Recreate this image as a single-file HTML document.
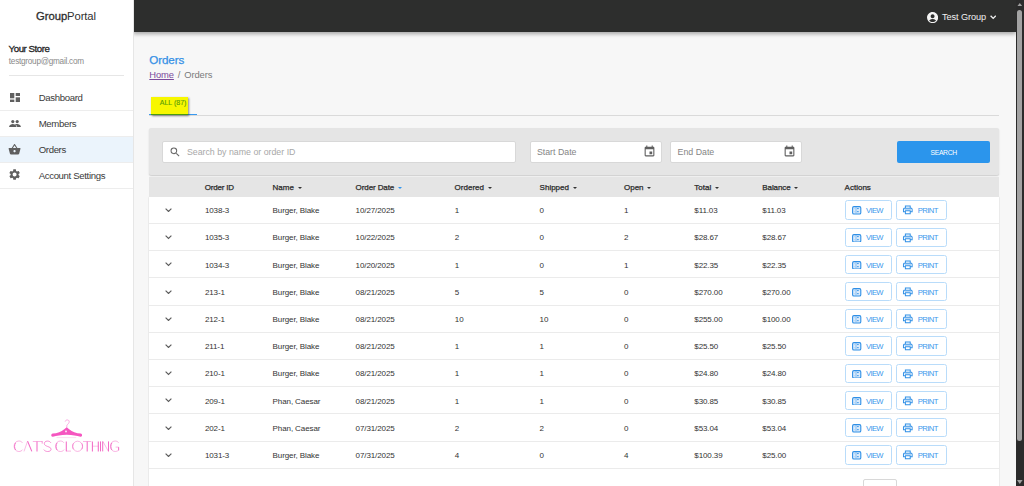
<!DOCTYPE html>
<html><head><meta charset="utf-8">
<style>
*{box-sizing:border-box;margin:0;padding:0}
html,body{width:1024px;height:486px;overflow:hidden;background:#f7f7f7;font-family:"Liberation Sans",sans-serif;color:#333}
#side{position:absolute;z-index:3;left:0;top:0;width:134px;height:486px;background:#fff;border-right:1px solid #e6e6e6}
#brand{position:absolute;left:-0.5px;width:133px;top:10.4px;text-align:center;font-size:11.25px;color:#2f2f2f;white-space:nowrap;letter-spacing:-0.1px}
#brand b{font-weight:normal;-webkit-text-stroke:0.32px #2f2f2f;letter-spacing:-0.05px}
#store{position:absolute;left:8.6px;top:42.9px;font-size:9.7px;font-weight:normal;color:#222;-webkit-text-stroke:0.28px #222;letter-spacing:-0.45px;white-space:nowrap}
#email{position:absolute;left:8.8px;top:56.5px;font-size:8.2px;color:#8a8a8a;letter-spacing:-0.25px;white-space:nowrap}
#div1{position:absolute;left:8.5px;top:75px;width:115.5px;height:1px;background:#e6e6e6}
.nav{position:absolute;left:0;width:133px;height:26.4px;border-bottom:1px solid #ededed}
.nav span{position:absolute;left:38.7px;top:7px;font-size:9.6px;color:#3a3a3a;letter-spacing:-0.35px;white-space:nowrap}
.nav svg{position:absolute}
.nav.active{background:#ebf4fc}
#hdr{position:absolute;left:133px;top:0;width:883px;height:32px;background:#2d2e2d;box-shadow:0 1.5px 4px rgba(0,0,0,.33)}
#user{position:absolute;left:942px;top:12.2px;font-size:9.2px;color:#f0f0f0;white-space:nowrap;letter-spacing:-0.1px}
#sb{position:absolute;left:1016px;top:0;width:8px;height:486px;background:#2b2b2b}
#thumb{position:absolute;left:1.4px;top:9.5px;width:5px;height:431.5px;border-radius:2.5px;background:#a3a3a3}
#title{position:absolute;left:149.3px;top:53.1px;font-size:11.6px;color:#3490e6;-webkit-text-stroke:0.25px #3490e6;letter-spacing:-0.1px}
#crumb{position:absolute;left:149.3px;top:69.2px;font-size:9.4px;color:#7a7a7a;white-space:nowrap;letter-spacing:-0.1px}
#crumb a{color:#7b4a9c;text-decoration:underline;text-decoration-thickness:0.8px;text-underline-offset:1px}
#crumb i{font-style:normal;margin:0 3.9px}
#tabline{position:absolute;left:149px;top:114.6px;width:850px;height:0.8px;background:#dadada}
#tabsel{position:absolute;left:149px;top:113.7px;width:48px;height:1.7px;background:#3a9af0}
#hl{position:absolute;left:151.2px;top:96.8px;width:37.3px;height:18.5px;background:#f7f700;box-shadow:1px 1px 2px rgba(0,0,0,.45);border-bottom:1.2px solid #4a9a10}
#alltxt{position:absolute;left:159.8px;top:99.3px;font-size:7px;color:#5a9e08;white-space:nowrap;-webkit-text-stroke:0.12px #5a9e08;letter-spacing:0px}
#filter{position:absolute;left:149px;top:128.2px;width:850px;height:46.8px;background:#e5e5e5;border-radius:2px;box-shadow:0 1px 1.5px rgba(0,0,0,.18)}
.inp{position:absolute;top:141.3px;height:21.5px;background:#fff;border:1px solid #d8d8d8;border-radius:2px}
.inp span{position:absolute;top:4.9px;font-size:8.8px;color:#858585;white-space:nowrap;letter-spacing:0px}
#searchbtn{position:absolute;left:897.2px;top:141.2px;width:93px;height:21.4px;background:#2b95ec;border-radius:2px;color:#fff;font-size:6.8px;text-align:center;line-height:23.2px;letter-spacing:-0.3px}
#thead{position:absolute;left:149px;top:177px;width:850px;height:19.8px;background:#e5e5e5}
#thead span{position:absolute;top:5.9px;font-size:8px;font-weight:normal;color:#2a2a2a;-webkit-text-stroke:0.25px #2a2a2a;white-space:nowrap;letter-spacing:0px}
.tri{display:inline-block;width:0;height:0;border-left:2.6px solid transparent;border-right:2.6px solid transparent;border-top:2.9px solid #333;margin-left:3.9px;vertical-align:1.4px}
#tbody{position:absolute;left:149px;top:196.8px;width:850px;height:290px;background:#fff;box-shadow:0 0 1.2px rgba(0,0,0,.22)}
.row{position:absolute;left:0;width:850px;height:27.2px;border-bottom:1px solid #ebebeb}
.row .chev{position:absolute;left:16px;top:11.2px}
.row .c{position:absolute;top:9.4px;font-size:8px;color:#333;white-space:nowrap;letter-spacing:-0.1px}
.btn{position:absolute;top:3.6px;height:19.5px;border:1px solid #b9dcfa;border-radius:2.5px}
.btn.view{width:47.4px}
.btn.print{width:50.6px}
.btn .bi{position:absolute;left:6.6px;top:5.1px}
.btn.print .bi{left:4.7px;top:2.95px}
.btn b{position:absolute;top:4.8px;font-weight:normal;font-size:7.6px;color:#3a97ec;white-space:nowrap;letter-spacing:-0.62px}
.btn.view b{left:20.3px}
.btn.print b{left:20.6px;letter-spacing:-0.5px}
#pag{position:absolute;left:862.7px;top:479.1px;width:34px;height:20px;border:1px solid #d8d8d8;border-radius:2px;background:#fff}
</style></head><body>
<div id="side">
  <div id="brand"><b>Group</b>Portal</div>
  <div id="store">Your Store</div>
  <div id="email">testgroup@gmail.com</div>
  <div id="div1"></div>
  <div class="nav" style="top:84.5px"><svg style="left:10px;top:8.3px" width="10" height="9.6" viewBox="0 0 10 9.6"><rect x="0" y="0" width="4.3" height="5.3" fill="#5f5f5f"/><rect x="5.7" y="0" width="4.3" height="3" fill="#5f5f5f"/><rect x="0" y="6.6" width="4.3" height="3" fill="#5f5f5f"/><rect x="5.7" y="4.3" width="4.3" height="5.3" fill="#5f5f5f"/></svg><span>Dashboard</span></div>
  <div class="nav" style="top:110.5px"><svg style="left:9.1px;top:9.2px" width="12" height="7.6" viewBox="0 0 12 7.6"><circle cx="3.8" cy="1.6" r="1.6" fill="#5f5f5f"/><circle cx="8.2" cy="1.6" r="1.6" fill="#5f5f5f"/><path d="M0 7.6 C0 4.8 2.2 4 3.8 4 C5.4 4 7.6 4.8 7.6 7.6Z" fill="#5f5f5f"/><path d="M5.6 4.3 C6.6 4 7.4 4 8.2 4 C9.8 4 12 4.8 12 7.6 H8.3 C8.3 6 7.2 4.9 5.6 4.3Z" fill="#5f5f5f"/></svg><span>Members</span></div>
  <div class="nav active" style="top:136.5px"><svg style="left:8.25px;top:6.4px" width="13.1" height="13.1" viewBox="0 0 24 24"><path fill="#5f5f5f" d="M17.21 9l-4.38-6.56c-.19-.28-.51-.42-.83-.42-.32 0-.64.14-.83.43L6.79 9H2c-.55 0-1 .45-1 1 0 .09.01.18.04.27l2.54 9.27c.23.84 1 1.460 1.92 1.46h13c.92 0 1.69-.62 1.93-1.46l2.54-9.27L23 10c0-.55-.45-1-1-1h-4.79zM9 9l3-4.4L15 9H9zm3 8c-1.1 0-2-.9-2-2s.9-2 2-2 2 .9 2 2-.9 2-2 2z"/></svg><span>Orders</span></div>
  <div class="nav" style="top:162.7px"><svg style="left:8.3px;top:5.8px" width="13.2" height="13.2" viewBox="0 0 24 24"><path fill="#5f5f5f" d="M19.14 12.94c.04-.3.06-.61.06-.94 0-.32-.02-.64-.07-.94l2.030-1.58a.49.49 0 0 0 .12-.61l-1.92-3.32a.488.488 0 0 0-.59-.22l-2.39.96c-.5-.38-1.03-.7-1.62-.94l-.36-2.54a.484.484 0 0 0-.48-.41h-3.84c-.24 0-.43.17-.47.41l-.36 2.54c-.59.24-1.13.57-1.62.94l-2.39-.96c-.22-.08-.47 0-.59.22L2.74 8.870c-.12.21-.08.47.12.61l2.03 1.58c-.05.3-.09.63-.09.94s.02.64.07.94l-2.03 1.58a.49.49 0 0 0-.12.61l1.92 3.32c.12.22.37.29.59.22l2.39-.96c.5.38 1.03.7 1.62.94l.36 2.54c.05.24.24.41.48.41h3.84c.24 0 .44-.17.47-.41l.36-2.54c.59-.24 1.13-.56 1.62-.94l2.39.96c.22.08.47 0 .59-.22l1.92-3.32c.12-.22.07-.47-.12-.61l-2.01-1.58zM12 15.6c-1.98 0-3.6-1.62-3.6-3.6s1.62-3.6 3.6-3.6 3.6 1.62 3.6 3.6-1.620 3.6-3.6 3.6z"/></svg><span>Account Settings</span></div>
  <svg style="position:absolute;left:0;top:410px" width="133" height="50" viewBox="0 410 133 50">
    <path d="M66.8 427.6 L66.9 425.2 C67.5 424.2 69.4 423.2 69.2 421.4 C69 419.6 65.6 419.2 65.2 421.6" fill="none" stroke="#f78ad6" stroke-width="0.7"/>
    <path transform="translate(66.7 0) scale(0.92 1) translate(-66.7 0)" d="M66.7 427.3 C63 430 60 432.4 55 433.2 L51.5 433.5 C49.4 433.8 49.4 437 51.7 436.7 C56 436 60 434.8 66.7 434.8 C73.4 434.8 77.4 436 81.7 436.7 C84 437 84 433.8 81.9 433.5 L78.4 433.2 C73.4 432.4 70.4 430 66.7 427.3Z" fill="#f556c0"/>
    <path d="M65 431.2 C65 430.4 65.9 430.4 66 431 C66.1 430.4 67 430.4 67 431.2 C67 431.9 66 432.6 66 432.6 C66 432.6 65 431.9 65 431.2Z" fill="#fde6f4"/>
    <path d="M56.6 437.6 H76.2" stroke="#f9c4e6" stroke-width="0.55"/>
    <g fill="none" stroke="#f26cc6">
      <path d="M22.4 442.8 C21.6 441.4 20.2 441 18.8 441 C15.8 441 14.1 443.6 14.1 446.3 C14.1 449.1 15.9 451.5 18.9 451.5 C20.4 451.5 21.8 450.9 22.6 449.6" stroke-width="0.5"/>
      <path d="M15.6 442.8 C14.2 445 14.2 447.8 15.6 450" stroke-width="0.9"/>
      <path d="M24 451.4 L27.6 441.1" stroke-width="0.45"/>
      <path d="M27.6 441.1 L31.8 451.4" stroke-width="1.1"/>
      <path d="M32.8 441.5 H42" stroke-width="0.5"/>
      <path d="M37 441.4 V451.4" stroke-width="1.05"/>
      <path d="M42.2 441 V443.6" stroke-width="0.7"/>
      <path d="M50.9 442.8 C50 441.4 48.6 441.1 47.4 441.1 C45.4 441.1 44.3 442.2 44.3 443.7 C44.3 446.6 51.1 446.4 51.1 449.2 C51.1 450.8 49.6 451.5 47.6 451.5 C46 451.5 44.6 450.8 43.8 449.6" stroke-width="0.75"/>
      <path d="M63.9 442.8 C63.1 441.4 61.7 441 60.3 441 C57.3 441 55.6 443.6 55.6 446.3 C55.6 449.1 57.4 451.5 60.4 451.5 C61.9 451.5 63.3 450.9 64.1 449.6" stroke-width="0.5"/>
      <path d="M57.1 442.8 C55.7 445 55.7 447.8 57.1 450" stroke-width="0.9"/>
      <path d="M66.3 441.4 V451.3" stroke-width="1.05"/>
      <path d="M66 451.1 H71" stroke-width="0.5"/>
      <ellipse cx="77.6" cy="446.3" rx="4.9" ry="5.1" stroke-width="0.5"/>
      <path d="M73.4 443.3 C72.4 445.2 72.4 447.4 73.4 449.3 M81.8 443.3 C82.8 445.2 82.8 447.4 81.8 449.3" stroke-width="0.7"/>
      <path d="M83 441.5 H91.3" stroke-width="0.5"/>
      <path d="M87.2 441.4 V451.4" stroke-width="1.05"/>
      <path d="M92.4 441.4 V451.4 M98.3 441.4 V451.4" stroke-width="1.05"/>
      <path d="M92.4 446.2 H98.3" stroke-width="0.4"/>
      <path d="M100.5 441.4 V451.4" stroke-width="1.05"/>
      <path d="M102.7 441.4 V451.4" stroke-width="1.0"/>
      <path d="M102.9 441.4 L108.4 451.4" stroke-width="0.45"/>
      <path d="M108.5 441.4 V451.4" stroke-width="1.0"/>
      <path d="M118.6 442.8 C117.8 441.4 116.4 441 115 441 C112 441 110.4 443.6 110.4 446.3 C110.4 449.1 112.2 451.5 115.2 451.5 C116.6 451.5 117.8 451 118.6 450.2 V447.1 H115.6" stroke-width="0.5"/>
      <path d="M111.9 442.8 C110.5 445 110.5 447.8 111.9 450 M118.6 447.2 V450.4" stroke-width="0.9"/>
    </g>
  </svg>
</div>
<div id="hdr"></div>
<svg style="position:absolute;left:927px;top:11.6px" width="11.2" height="11.2" viewBox="2 2 20 20"><path fill="#f4f4f4" d="M12 2C6.48 2 2 6.48 2 12s4.48 10 10 10 10-4.48 10-10S17.52 2 12 2zm0 4c1.93 0 3.5 1.57 3.5 3.5S13.93 13 12 13s-3.5-1.570-3.5-3.5S10.07 6 12 6zm0 14c-2.03 0-4.43-.82-6.14-2.88a9.947 9.947 0 0 1 12.28 0C16.43 19.18 14.03 20 12 20z"/></svg>
<div id="user">Test Group</div>
<svg style="position:absolute;left:989.6px;top:15.2px" width="6.4" height="4.4" viewBox="0 0 6.4 4.4"><path d="M0.6 0.7 L3.2 3.4 L5.8 0.7" fill="none" stroke="#f2f2f2" stroke-width="1.3"/></svg>
<div id="sb"><div id="thumb"></div>
<svg style="position:absolute;left:1.2px;top:2.6px" width="5.6" height="3.6" viewBox="0 0 5.6 3.6"><path d="M2.8 0 L5.6 3.6 H0Z" fill="#a0a0a0"/></svg>
<svg style="position:absolute;left:1.2px;top:479.6px" width="5.6" height="4" viewBox="0 0 5.6 4"><path d="M0 0 H5.6 L2.8 4Z" fill="#a0a0a0"/></svg>
</div>
<div id="title">Orders</div>
<div id="crumb"><a>Home</a><i>/</i>Orders</div>
<div id="tabline"></div>
<div id="tabsel"></div>
<div id="hl"></div>
<div id="alltxt">ALL (87)</div>
<div id="filter"></div>
<div class="inp" style="left:162.4px;width:354px"><svg style="position:absolute;left:6.1px;top:3.7px" width="12.3" height="12.3" viewBox="0 0 24 24"><path fill="#666" d="M15.5 14h-.79l-.28-.27A6.471 6.471 0 0 0 16 9.5 6.5 6.5 0 1 0 9.5 16c1.61 0 3.09-.59 4.23-1.57l.27.28v.79l5 4.99L20.49 19l-4.99-5zm-6 0C7.01 14 5 11.99 5 9.5S7.01 5 9.5 5 14 7.01 14 9.5 11.99 14 9.5 14z"/></svg><span style="left:23.5px;color:#a8a8a8">Search by name or order ID</span></div>
<div class="inp" style="left:529.5px;width:132.4px"><span style="left:6.4px">Start Date</span><svg style="position:absolute;left:112.8px;top:3px" width="13" height="13" viewBox="0 0 24 24"><path fill="#5f5f5f" d="M17 12h-5v5h5v-5zM16 1v2H8V1H6v2H5c-1.11 0-1.99.9-1.99 2L3 19a2 2 0 0 0 2 2h14c1.1 0 2-.9 2-2V5c0-1.1-.9-2-2-2h-1V1h-2zm3 18H5V8h14v11z"/></svg></div>
<div class="inp" style="left:670.2px;width:131.8px"><span style="left:6.4px">End Date</span><svg style="position:absolute;left:112.2px;top:3px" width="13" height="13" viewBox="0 0 24 24"><path fill="#5f5f5f" d="M17 12h-5v5h5v-5zM16 1v2H8V1H6v2H5c-1.11 0-1.99.9-1.99 2L3 19a2 2 0 0 0 2 2h14c1.1 0 2-.9 2-2V5c0-1.1-.9-2-2-2h-1V1h-2zm3 18H5V8h14v11z"/></svg></div>
<div id="searchbtn">SEARCH</div>
<div id="tbody">
<div class="row" style="top:0.0px"><svg class="chev" width="7" height="4.4" viewBox="0 0 7 4.4"><path d="M0.6 0.6 L3.5 3.5 L6.4 0.6" fill="none" stroke="#5c5c5c" stroke-width="1.15"/></svg><span class="c" style="left:55.9px">1038-3</span><span class="c" style="left:123.6px">Burger, Blake</span><span class="c" style="left:206.6px">10/27/2025</span><span class="c" style="left:305.8px">1</span><span class="c" style="left:390.6px">0</span><span class="c" style="left:475.0px">1</span><span class="c" style="left:545.3px">$11.03</span><span class="c" style="left:613.3px">$11.03</span><span class="btn view" style="left:695.7px"><svg class="bi" width="9.4" height="8.6" viewBox="0 0 9.4 8.6"><rect x="0.6" y="0.6" width="8.2" height="7.4" rx="1.3" fill="#dcecfc" stroke="#2f8fe6" stroke-width="1.1"/><path d="M4 1 V7.6" stroke="#6fb0ee" stroke-width="0.8"/><path d="M5 2.6 H6.8 M5 5.7 H6.8" stroke="#2f8fe6" stroke-width="0.9"/><path d="M1.8 2.6 H3 M1.8 5.7 H3" stroke="#a8d0f6" stroke-width="0.8"/></svg><b>VIEW</b></span><span class="btn print" style="left:747.1px"><svg class="bi" width="11.6" height="11.6" viewBox="0 0 24 24"><path fill="#2f8fe6" d="M19 8h-1V3H6v5H5c-1.66 0-3 1.34-3 3v6h4v4h12v-4h4v-6c0-1.66-1.34-3-3-3zM8 5h8v3H8V5zm8 12v2H8v-4h8v2zm2-2v-2H6v2H4v-4c0-.55.45-1 1-1h14c.55 0 1 .45 1 1v4h-2z"/><path d="M5 10.2h14v2H5z" fill="#a9d1f7"/></svg><b>PRINT</b></span></div>
<div class="row" style="top:27.2px"><svg class="chev" width="7" height="4.4" viewBox="0 0 7 4.4"><path d="M0.6 0.6 L3.5 3.5 L6.4 0.6" fill="none" stroke="#5c5c5c" stroke-width="1.15"/></svg><span class="c" style="left:55.9px">1035-3</span><span class="c" style="left:123.6px">Burger, Blake</span><span class="c" style="left:206.6px">10/22/2025</span><span class="c" style="left:305.8px">2</span><span class="c" style="left:390.6px">0</span><span class="c" style="left:475.0px">2</span><span class="c" style="left:545.3px">$28.67</span><span class="c" style="left:613.3px">$28.67</span><span class="btn view" style="left:695.7px"><svg class="bi" width="9.4" height="8.6" viewBox="0 0 9.4 8.6"><rect x="0.6" y="0.6" width="8.2" height="7.4" rx="1.3" fill="#dcecfc" stroke="#2f8fe6" stroke-width="1.1"/><path d="M4 1 V7.6" stroke="#6fb0ee" stroke-width="0.8"/><path d="M5 2.6 H6.8 M5 5.7 H6.8" stroke="#2f8fe6" stroke-width="0.9"/><path d="M1.8 2.6 H3 M1.8 5.7 H3" stroke="#a8d0f6" stroke-width="0.8"/></svg><b>VIEW</b></span><span class="btn print" style="left:747.1px"><svg class="bi" width="11.6" height="11.6" viewBox="0 0 24 24"><path fill="#2f8fe6" d="M19 8h-1V3H6v5H5c-1.66 0-3 1.34-3 3v6h4v4h12v-4h4v-6c0-1.66-1.34-3-3-3zM8 5h8v3H8V5zm8 12v2H8v-4h8v2zm2-2v-2H6v2H4v-4c0-.55.45-1 1-1h14c.55 0 1 .45 1 1v4h-2z"/><path d="M5 10.2h14v2H5z" fill="#a9d1f7"/></svg><b>PRINT</b></span></div>
<div class="row" style="top:54.4px"><svg class="chev" width="7" height="4.4" viewBox="0 0 7 4.4"><path d="M0.6 0.6 L3.5 3.5 L6.4 0.6" fill="none" stroke="#5c5c5c" stroke-width="1.15"/></svg><span class="c" style="left:55.9px">1034-3</span><span class="c" style="left:123.6px">Burger, Blake</span><span class="c" style="left:206.6px">10/20/2025</span><span class="c" style="left:305.8px">1</span><span class="c" style="left:390.6px">0</span><span class="c" style="left:475.0px">1</span><span class="c" style="left:545.3px">$22.35</span><span class="c" style="left:613.3px">$22.35</span><span class="btn view" style="left:695.7px"><svg class="bi" width="9.4" height="8.6" viewBox="0 0 9.4 8.6"><rect x="0.6" y="0.6" width="8.2" height="7.4" rx="1.3" fill="#dcecfc" stroke="#2f8fe6" stroke-width="1.1"/><path d="M4 1 V7.6" stroke="#6fb0ee" stroke-width="0.8"/><path d="M5 2.6 H6.8 M5 5.7 H6.8" stroke="#2f8fe6" stroke-width="0.9"/><path d="M1.8 2.6 H3 M1.8 5.7 H3" stroke="#a8d0f6" stroke-width="0.8"/></svg><b>VIEW</b></span><span class="btn print" style="left:747.1px"><svg class="bi" width="11.6" height="11.6" viewBox="0 0 24 24"><path fill="#2f8fe6" d="M19 8h-1V3H6v5H5c-1.66 0-3 1.34-3 3v6h4v4h12v-4h4v-6c0-1.66-1.34-3-3-3zM8 5h8v3H8V5zm8 12v2H8v-4h8v2zm2-2v-2H6v2H4v-4c0-.55.45-1 1-1h14c.55 0 1 .45 1 1v4h-2z"/><path d="M5 10.2h14v2H5z" fill="#a9d1f7"/></svg><b>PRINT</b></span></div>
<div class="row" style="top:81.6px"><svg class="chev" width="7" height="4.4" viewBox="0 0 7 4.4"><path d="M0.6 0.6 L3.5 3.5 L6.4 0.6" fill="none" stroke="#5c5c5c" stroke-width="1.15"/></svg><span class="c" style="left:55.9px">213-1</span><span class="c" style="left:123.6px">Burger, Blake</span><span class="c" style="left:206.6px">08/21/2025</span><span class="c" style="left:305.8px">5</span><span class="c" style="left:390.6px">5</span><span class="c" style="left:475.0px">0</span><span class="c" style="left:545.3px">$270.00</span><span class="c" style="left:613.3px">$270.00</span><span class="btn view" style="left:695.7px"><svg class="bi" width="9.4" height="8.6" viewBox="0 0 9.4 8.6"><rect x="0.6" y="0.6" width="8.2" height="7.4" rx="1.3" fill="#dcecfc" stroke="#2f8fe6" stroke-width="1.1"/><path d="M4 1 V7.6" stroke="#6fb0ee" stroke-width="0.8"/><path d="M5 2.6 H6.8 M5 5.7 H6.8" stroke="#2f8fe6" stroke-width="0.9"/><path d="M1.8 2.6 H3 M1.8 5.7 H3" stroke="#a8d0f6" stroke-width="0.8"/></svg><b>VIEW</b></span><span class="btn print" style="left:747.1px"><svg class="bi" width="11.6" height="11.6" viewBox="0 0 24 24"><path fill="#2f8fe6" d="M19 8h-1V3H6v5H5c-1.66 0-3 1.34-3 3v6h4v4h12v-4h4v-6c0-1.66-1.34-3-3-3zM8 5h8v3H8V5zm8 12v2H8v-4h8v2zm2-2v-2H6v2H4v-4c0-.55.45-1 1-1h14c.55 0 1 .45 1 1v4h-2z"/><path d="M5 10.2h14v2H5z" fill="#a9d1f7"/></svg><b>PRINT</b></span></div>
<div class="row" style="top:108.8px"><svg class="chev" width="7" height="4.4" viewBox="0 0 7 4.4"><path d="M0.6 0.6 L3.5 3.5 L6.4 0.6" fill="none" stroke="#5c5c5c" stroke-width="1.15"/></svg><span class="c" style="left:55.9px">212-1</span><span class="c" style="left:123.6px">Burger, Blake</span><span class="c" style="left:206.6px">08/21/2025</span><span class="c" style="left:305.8px">10</span><span class="c" style="left:390.6px">10</span><span class="c" style="left:475.0px">0</span><span class="c" style="left:545.3px">$255.00</span><span class="c" style="left:613.3px">$100.00</span><span class="btn view" style="left:695.7px"><svg class="bi" width="9.4" height="8.6" viewBox="0 0 9.4 8.6"><rect x="0.6" y="0.6" width="8.2" height="7.4" rx="1.3" fill="#dcecfc" stroke="#2f8fe6" stroke-width="1.1"/><path d="M4 1 V7.6" stroke="#6fb0ee" stroke-width="0.8"/><path d="M5 2.6 H6.8 M5 5.7 H6.8" stroke="#2f8fe6" stroke-width="0.9"/><path d="M1.8 2.6 H3 M1.8 5.7 H3" stroke="#a8d0f6" stroke-width="0.8"/></svg><b>VIEW</b></span><span class="btn print" style="left:747.1px"><svg class="bi" width="11.6" height="11.6" viewBox="0 0 24 24"><path fill="#2f8fe6" d="M19 8h-1V3H6v5H5c-1.66 0-3 1.34-3 3v6h4v4h12v-4h4v-6c0-1.66-1.34-3-3-3zM8 5h8v3H8V5zm8 12v2H8v-4h8v2zm2-2v-2H6v2H4v-4c0-.55.45-1 1-1h14c.55 0 1 .45 1 1v4h-2z"/><path d="M5 10.2h14v2H5z" fill="#a9d1f7"/></svg><b>PRINT</b></span></div>
<div class="row" style="top:136.0px"><svg class="chev" width="7" height="4.4" viewBox="0 0 7 4.4"><path d="M0.6 0.6 L3.5 3.5 L6.4 0.6" fill="none" stroke="#5c5c5c" stroke-width="1.15"/></svg><span class="c" style="left:55.9px">211-1</span><span class="c" style="left:123.6px">Burger, Blake</span><span class="c" style="left:206.6px">08/21/2025</span><span class="c" style="left:305.8px">1</span><span class="c" style="left:390.6px">1</span><span class="c" style="left:475.0px">0</span><span class="c" style="left:545.3px">$25.50</span><span class="c" style="left:613.3px">$25.50</span><span class="btn view" style="left:695.7px"><svg class="bi" width="9.4" height="8.6" viewBox="0 0 9.4 8.6"><rect x="0.6" y="0.6" width="8.2" height="7.4" rx="1.3" fill="#dcecfc" stroke="#2f8fe6" stroke-width="1.1"/><path d="M4 1 V7.6" stroke="#6fb0ee" stroke-width="0.8"/><path d="M5 2.6 H6.8 M5 5.7 H6.8" stroke="#2f8fe6" stroke-width="0.9"/><path d="M1.8 2.6 H3 M1.8 5.7 H3" stroke="#a8d0f6" stroke-width="0.8"/></svg><b>VIEW</b></span><span class="btn print" style="left:747.1px"><svg class="bi" width="11.6" height="11.6" viewBox="0 0 24 24"><path fill="#2f8fe6" d="M19 8h-1V3H6v5H5c-1.66 0-3 1.34-3 3v6h4v4h12v-4h4v-6c0-1.66-1.34-3-3-3zM8 5h8v3H8V5zm8 12v2H8v-4h8v2zm2-2v-2H6v2H4v-4c0-.55.45-1 1-1h14c.55 0 1 .45 1 1v4h-2z"/><path d="M5 10.2h14v2H5z" fill="#a9d1f7"/></svg><b>PRINT</b></span></div>
<div class="row" style="top:163.2px"><svg class="chev" width="7" height="4.4" viewBox="0 0 7 4.4"><path d="M0.6 0.6 L3.5 3.5 L6.4 0.6" fill="none" stroke="#5c5c5c" stroke-width="1.15"/></svg><span class="c" style="left:55.9px">210-1</span><span class="c" style="left:123.6px">Burger, Blake</span><span class="c" style="left:206.6px">08/21/2025</span><span class="c" style="left:305.8px">1</span><span class="c" style="left:390.6px">1</span><span class="c" style="left:475.0px">0</span><span class="c" style="left:545.3px">$24.80</span><span class="c" style="left:613.3px">$24.80</span><span class="btn view" style="left:695.7px"><svg class="bi" width="9.4" height="8.6" viewBox="0 0 9.4 8.6"><rect x="0.6" y="0.6" width="8.2" height="7.4" rx="1.3" fill="#dcecfc" stroke="#2f8fe6" stroke-width="1.1"/><path d="M4 1 V7.6" stroke="#6fb0ee" stroke-width="0.8"/><path d="M5 2.6 H6.8 M5 5.7 H6.8" stroke="#2f8fe6" stroke-width="0.9"/><path d="M1.8 2.6 H3 M1.8 5.7 H3" stroke="#a8d0f6" stroke-width="0.8"/></svg><b>VIEW</b></span><span class="btn print" style="left:747.1px"><svg class="bi" width="11.6" height="11.6" viewBox="0 0 24 24"><path fill="#2f8fe6" d="M19 8h-1V3H6v5H5c-1.66 0-3 1.34-3 3v6h4v4h12v-4h4v-6c0-1.66-1.34-3-3-3zM8 5h8v3H8V5zm8 12v2H8v-4h8v2zm2-2v-2H6v2H4v-4c0-.55.45-1 1-1h14c.55 0 1 .45 1 1v4h-2z"/><path d="M5 10.2h14v2H5z" fill="#a9d1f7"/></svg><b>PRINT</b></span></div>
<div class="row" style="top:190.4px"><svg class="chev" width="7" height="4.4" viewBox="0 0 7 4.4"><path d="M0.6 0.6 L3.5 3.5 L6.4 0.6" fill="none" stroke="#5c5c5c" stroke-width="1.15"/></svg><span class="c" style="left:55.9px">209-1</span><span class="c" style="left:123.6px">Phan, Caesar</span><span class="c" style="left:206.6px">08/21/2025</span><span class="c" style="left:305.8px">1</span><span class="c" style="left:390.6px">1</span><span class="c" style="left:475.0px">0</span><span class="c" style="left:545.3px">$30.85</span><span class="c" style="left:613.3px">$30.85</span><span class="btn view" style="left:695.7px"><svg class="bi" width="9.4" height="8.6" viewBox="0 0 9.4 8.6"><rect x="0.6" y="0.6" width="8.2" height="7.4" rx="1.3" fill="#dcecfc" stroke="#2f8fe6" stroke-width="1.1"/><path d="M4 1 V7.6" stroke="#6fb0ee" stroke-width="0.8"/><path d="M5 2.6 H6.8 M5 5.7 H6.8" stroke="#2f8fe6" stroke-width="0.9"/><path d="M1.8 2.6 H3 M1.8 5.7 H3" stroke="#a8d0f6" stroke-width="0.8"/></svg><b>VIEW</b></span><span class="btn print" style="left:747.1px"><svg class="bi" width="11.6" height="11.6" viewBox="0 0 24 24"><path fill="#2f8fe6" d="M19 8h-1V3H6v5H5c-1.66 0-3 1.34-3 3v6h4v4h12v-4h4v-6c0-1.66-1.34-3-3-3zM8 5h8v3H8V5zm8 12v2H8v-4h8v2zm2-2v-2H6v2H4v-4c0-.55.45-1 1-1h14c.55 0 1 .45 1 1v4h-2z"/><path d="M5 10.2h14v2H5z" fill="#a9d1f7"/></svg><b>PRINT</b></span></div>
<div class="row" style="top:217.6px"><svg class="chev" width="7" height="4.4" viewBox="0 0 7 4.4"><path d="M0.6 0.6 L3.5 3.5 L6.4 0.6" fill="none" stroke="#5c5c5c" stroke-width="1.15"/></svg><span class="c" style="left:55.9px">202-1</span><span class="c" style="left:123.6px">Phan, Caesar</span><span class="c" style="left:206.6px">07/31/2025</span><span class="c" style="left:305.8px">2</span><span class="c" style="left:390.6px">2</span><span class="c" style="left:475.0px">0</span><span class="c" style="left:545.3px">$53.04</span><span class="c" style="left:613.3px">$53.04</span><span class="btn view" style="left:695.7px"><svg class="bi" width="9.4" height="8.6" viewBox="0 0 9.4 8.6"><rect x="0.6" y="0.6" width="8.2" height="7.4" rx="1.3" fill="#dcecfc" stroke="#2f8fe6" stroke-width="1.1"/><path d="M4 1 V7.6" stroke="#6fb0ee" stroke-width="0.8"/><path d="M5 2.6 H6.8 M5 5.7 H6.8" stroke="#2f8fe6" stroke-width="0.9"/><path d="M1.8 2.6 H3 M1.8 5.7 H3" stroke="#a8d0f6" stroke-width="0.8"/></svg><b>VIEW</b></span><span class="btn print" style="left:747.1px"><svg class="bi" width="11.6" height="11.6" viewBox="0 0 24 24"><path fill="#2f8fe6" d="M19 8h-1V3H6v5H5c-1.66 0-3 1.34-3 3v6h4v4h12v-4h4v-6c0-1.66-1.34-3-3-3zM8 5h8v3H8V5zm8 12v2H8v-4h8v2zm2-2v-2H6v2H4v-4c0-.55.45-1 1-1h14c.55 0 1 .45 1 1v4h-2z"/><path d="M5 10.2h14v2H5z" fill="#a9d1f7"/></svg><b>PRINT</b></span></div>
<div class="row" style="top:244.8px"><svg class="chev" width="7" height="4.4" viewBox="0 0 7 4.4"><path d="M0.6 0.6 L3.5 3.5 L6.4 0.6" fill="none" stroke="#5c5c5c" stroke-width="1.15"/></svg><span class="c" style="left:55.9px">1031-3</span><span class="c" style="left:123.6px">Burger, Blake</span><span class="c" style="left:206.6px">07/31/2025</span><span class="c" style="left:305.8px">4</span><span class="c" style="left:390.6px">0</span><span class="c" style="left:475.0px">4</span><span class="c" style="left:545.3px">$100.39</span><span class="c" style="left:613.3px">$25.00</span><span class="btn view" style="left:695.7px"><svg class="bi" width="9.4" height="8.6" viewBox="0 0 9.4 8.6"><rect x="0.6" y="0.6" width="8.2" height="7.4" rx="1.3" fill="#dcecfc" stroke="#2f8fe6" stroke-width="1.1"/><path d="M4 1 V7.6" stroke="#6fb0ee" stroke-width="0.8"/><path d="M5 2.6 H6.8 M5 5.7 H6.8" stroke="#2f8fe6" stroke-width="0.9"/><path d="M1.8 2.6 H3 M1.8 5.7 H3" stroke="#a8d0f6" stroke-width="0.8"/></svg><b>VIEW</b></span><span class="btn print" style="left:747.1px"><svg class="bi" width="11.6" height="11.6" viewBox="0 0 24 24"><path fill="#2f8fe6" d="M19 8h-1V3H6v5H5c-1.66 0-3 1.34-3 3v6h4v4h12v-4h4v-6c0-1.66-1.34-3-3-3zM8 5h8v3H8V5zm8 12v2H8v-4h8v2zm2-2v-2H6v2H4v-4c0-.55.45-1 1-1h14c.55 0 1 .45 1 1v4h-2z"/><path d="M5 10.2h14v2H5z" fill="#a9d1f7"/></svg><b>PRINT</b></span></div>
</div>
<div id="thead">
<span style="left:55.8px;letter-spacing:-0.2px">Order ID</span>
<span style="left:123.6px">Name<i class="tri"></i></span>
<span style="left:206.6px;letter-spacing:-0.1px">Order Date<i class="tri" style="border-top-color:#2f95f0"></i></span>
<span style="left:305.6px">Ordered<i class="tri"></i></span>
<span style="left:390.6px">Shipped<i class="tri"></i></span>
<span style="left:475px">Open<i class="tri"></i></span>
<span style="left:545.3px">Total<i class="tri"></i></span>
<span style="left:613.3px;letter-spacing:-0.1px">Balance<i class="tri"></i></span>
<span style="left:695.6px">Actions</span>
</div>
<div id="pag"></div>
</body></html>
